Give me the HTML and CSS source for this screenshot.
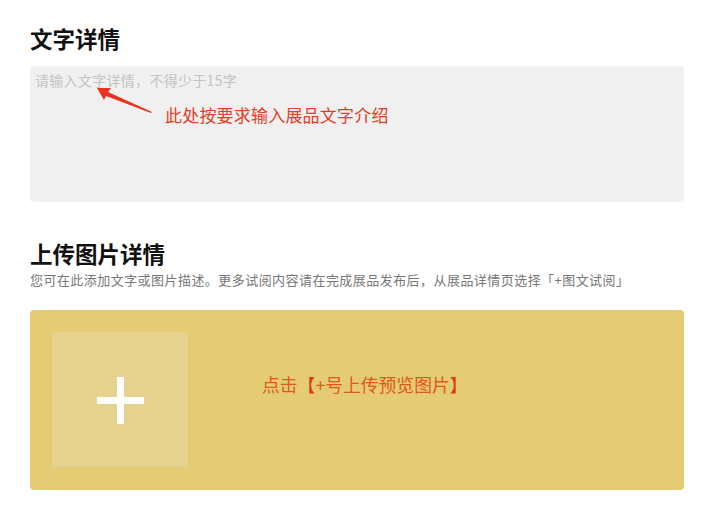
FILE: index.html
```html
<!doctype html>
<html>
<head>
	<meta charset="utf-8">
	<title>文字详情</title>
	<link rel="stylesheet" href="styles.css">
</head>
<body>
	<div class="page">
		<h2 class="title">文字详情</h2>
		<div class="textbox">
			<div class="placeholder">请输入文字详情，不得少于15字</div>
			<svg class="arrow" width="60" height="30" viewBox="0 0 60 30">
				<polygon points="0,1 14,1 11,5 55,25 54,26 9,9 7,13" fill="#e8341f"/>
			</svg>
			<div class="note">此处按要求输入展品文字介绍</div>
		</div>

		<h2 class="title second">上传图片详情</h2>
		<div class="hint">您可在此添加文字或图片描述。更多试阅内容请在完成展品发布后，从展品详情页选择「+图文试阅」</div>
		<div class="upload">
			<div class="add">
				<span class="plus-h"></span>
				<span class="plus-v"></span>
			</div>
			<div class="upload-note">点击<span class="bracket">【</span>+号上传预览图片<span class="bracket">】</span></div>
		</div>
	</div>
</body>
</html>
```

FILE: styles.css
```css
body {
	margin: 0;
	background: #fff;
	font-family: "Noto Sans CJK SC", "Noto Sans", sans-serif;
}

.page {
	padding: 22px 37px 0 30px;
}

.title {
	margin: 0;
	font-size: 22.5px;
	line-height: 32px;
	font-weight: 700;
	color: #111;
}

.title.second {
	margin-top: 35px;
}

.textbox {
	position: relative;
	margin-top: 12px;
	height: 136px;
	background: #f0f0f0;
	border-radius: 4px;
}

.placeholder {
	padding: 5px 0 0 5px;
	font-size: 14px;
	line-height: 18px;
	letter-spacing: 0.3px;
	color: #c3c3c3;
}

.arrow {
	position: absolute;
	left: 67px;
	top: 21px;
}

.note {
	position: absolute;
	left: 135px;
	top: 37px;
	font-size: 17px;
	line-height: 24px;
	letter-spacing: 0.2px;
	color: #e63b24;
}

.hint {
	margin-top: 2px;
	font-size: 13px;
	line-height: 18px;
	letter-spacing: 0.45px;
	color: #777;
}

.upload {
	display: flex;
	align-items: flex-start;
	margin-top: 21px;
	height: 136px;
	padding: 22px;
	background: #e5cb74;
	border-radius: 4px;
}

.add {
	position: relative;
	width: 136px;
	height: 135px;
	background: #e5d28e;
	flex: none;
}

.plus-h {
	position: absolute;
	left: 45px;
	top: 65px;
	width: 47px;
	height: 7px;
	background: #fff;
}

.plus-v {
	position: absolute;
	left: 65px;
	top: 45px;
	width: 7px;
	height: 47px;
	background: #fff;
}

.upload-note {
	margin: 40px 0 0 74px;
	font-size: 17.8px;
	line-height: 24px;
	color: #e0581a;
}

.bracket {
	color: #e03a10;
}
```
